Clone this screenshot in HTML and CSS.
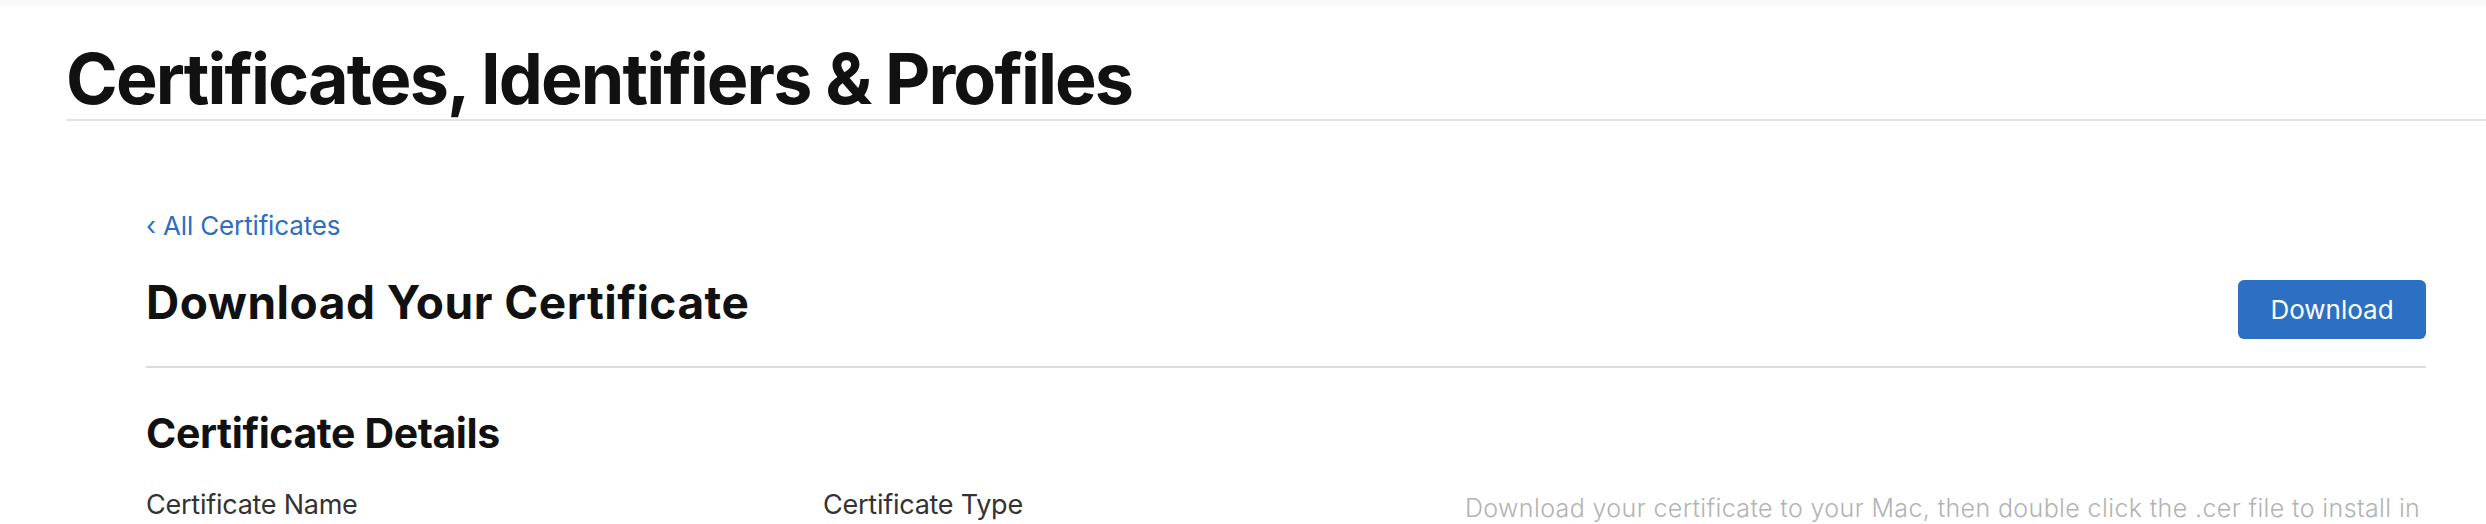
FILE: index.html
```html
<!DOCTYPE html>
<html lang="en">
<head>
<meta charset="utf-8">
<title>Certificates, Identifiers &amp; Profiles</title>
<link rel="stylesheet" href="styles.css">
</head>
<body>
<div class="topbar"></div>
<header class="page-header">
  <h1 class="page-title">Certificates, Identifiers &amp; Profiles</h1>
</header>
<main class="content">
  <a class="back-link" href="#"><span class="chev">‹</span> All Certificates</a>
  <div class="heading-row">
    <h2 class="section-title">Download Your Certificate</h2>
    <button class="btn-primary" type="button">Download</button>
  </div>
  <h3 class="details-title">Certificate Details</h3>
  <div class="details-grid">
    <div class="field-label">Certificate Name</div>
    <div class="field-label">Certificate Type</div>
    <div class="field-help">Download your certificate to your Mac, then double click the .cer file to install in</div>
  </div>
</main>
</body>
</html>
```
FILE: styles.css
```css
html, body {
  margin: 0;
  padding: 0;
  background: #ffffff;
}
body {
  font-family: Inter, "Noto Sans", "Liberation Sans", sans-serif;
  color: #111111;
  overflow: hidden;
}
.topbar {
  height: 6px;
  background: #f9f9f9;
}
.page-header {
  margin-left: 66px;
  border-bottom: 2px solid #e3e3e3;
  padding-top: 38px;
  padding-bottom: 5px;
}
.page-title {
  margin: 0;
  font-size: 70px;
  line-height: 70px;
  font-weight: 700;
  letter-spacing: -1.9px;
  color: #111111;
}
.content {
  padding: 0 60px 0 146px;
}
.back-link {
  display: block;
  margin-top: 89px;
  font-size: 26px;
  line-height: 32px;
  letter-spacing: -0.15px;
  color: #2c6fc2;
  text-decoration: none;
}
.heading-row {
  display: flex;
  justify-content: space-between;
  align-items: flex-start;
  margin-top: 34px;
  padding-bottom: 27px;
  border-bottom: 2px solid #dcdcdc;
}
.section-title {
  margin: 0;
  font-size: 46px;
  line-height: 52px;
  font-weight: 700;
  letter-spacing: 0.5px;
  color: #111111;
}
.btn-primary {
  margin-top: 4px;
  width: 188px;
  height: 59px;
  border: none;
  border-radius: 6px;
  background: #2c70c3;
  color: #ffffff;
  font-family: inherit;
  font-size: 26px;
  font-weight: 400;
  padding: 0;
}
.details-title {
  margin: 41px 0 0;
  font-size: 41px;
  line-height: 48px;
  font-weight: 700;
  letter-spacing: -0.4px;
  color: #111111;
}
.details-grid {
  display: grid;
  grid-template-columns: 677px 642px 1fr;
  margin-top: 32px;
}
.field-label {
  font-size: 27px;
  line-height: 32px;
  letter-spacing: -0.25px;
  color: #333333;
}
.field-help {
  margin-top: 3px;
  font-size: 25px;
  line-height: 32px;
  font-weight: 300;
  letter-spacing: 0.38px;
  color: #b3b3b3;
  white-space: nowrap;
}
```
